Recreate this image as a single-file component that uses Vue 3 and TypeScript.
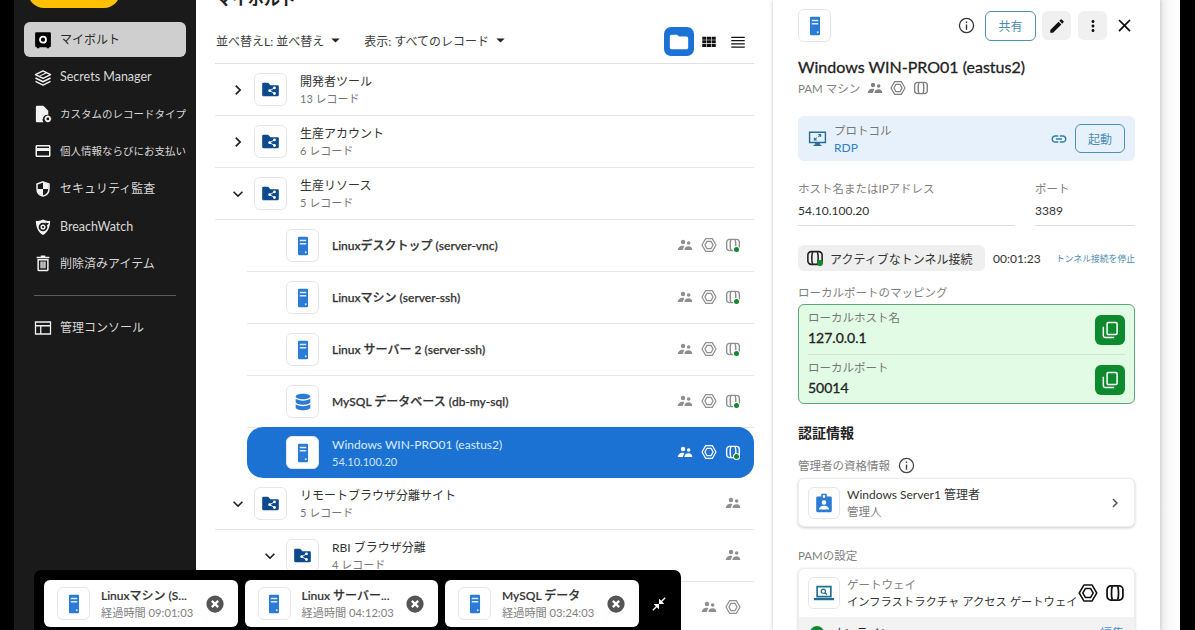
<script setup lang="ts">
type Row = {
  title: string
  sub?: string
  level: number
  kind: 'folder' | 'server' | 'db'
  open?: boolean
  closed?: boolean
  icons: 'none' | 'people' | 'two' | 'three'
  selected?: boolean
}

const navItems = [
  { icon: 'vault', label: 'マイボルト', active: true },
  { icon: 'layers', label: 'Secrets Manager', latin: true },
  { icon: 'filegear', label: 'カスタムのレコードタイプ', small: true },
  { icon: 'card', label: '個人情報ならびにお支払い', small: true },
  { icon: 'shield', label: 'セキュリティ監査' },
  { icon: 'breach', label: 'BreachWatch', latin: true },
  { icon: 'trash', label: '削除済みアイテム' },
]

const rows: Row[] = [
  { title: '開発者ツール', sub: '13 レコード', level: 0, kind: 'folder', closed: true, icons: 'none' },
  { title: '生産アカウント', sub: '6 レコード', level: 0, kind: 'folder', closed: true, icons: 'none' },
  { title: '生産リソース', sub: '5 レコード', level: 0, kind: 'folder', open: true, icons: 'none' },
  { title: 'Linuxデスクトップ (server-vnc)', level: 1, kind: 'server', icons: 'three' },
  { title: 'Linuxマシン (server-ssh)', level: 1, kind: 'server', icons: 'three' },
  { title: 'Linux サーバー 2 (server-ssh)', level: 1, kind: 'server', icons: 'three' },
  { title: 'MySQL データベース (db-my-sql)', level: 1, kind: 'db', icons: 'three' },
  { title: 'Windows WIN-PRO01 (eastus2)', sub: '54.10.100.20', level: 1, kind: 'server', icons: 'three', selected: true },
  { title: 'リモートブラウザ分離サイト', sub: '5 レコード', level: 0, kind: 'folder', open: true, icons: 'people' },
  { title: 'RBI ブラウザ分離', sub: '4 レコード', level: 1, kind: 'folder', open: true, icons: 'people' },
  { title: '', level: 2, kind: 'server', icons: 'two' },
]

const sessions = [
  { title: 'Linuxマシン (S...', time: '経過時間 09:01:03' },
  { title: 'Linux サーバー...', time: '経過時間 04:12:03' },
  { title: 'MySQL データ', time: '経過時間 03:24:03' },
]
</script>

<template>
  <svg class="sprite" aria-hidden="true">
    <defs>
      <symbol id="vault" viewBox="0 0 24 24">
        <path fill="#000" d="M3 1.500h18a1.500 1.500 0 0 1 1.500 1.500v17a1.500 1.500 0 0 1-1.500 1.500h-1v1.500h-3v-1.500H7v1.500H4v-1.500H3A1.500 1.500 0 0 1 1.500 20V3A1.500 1.500 0 0 1 3 1.500z" />
        <circle cx="12" cy="11.500" r="4" fill="none" stroke="#fff" stroke-width="2.400" />
      </symbol>
      <symbol id="layers" viewBox="0 0 24 24">
        <g fill="none" stroke="currentColor" stroke-width="1.900" stroke-linejoin="round">
          <path d="M12 2.500l10 5-10 5-10-5z" />
          <path d="M2 12l10 5 10-5" />
          <path d="M2 16.500l10 5 10-5" />
          <path d="M7.500 9.500l9-4.500" stroke-width="1.400" />
        </g>
      </symbol>
      <symbol id="filegear" viewBox="0 0 24 24">
        <path fill="currentColor" d="M4 1h8.500l6.500 6.500v5.600a6.500 6.500 0 0 0-6.500 9.900H4a1.500 1.500 0 0 1-1.500-1.500V2.500A1.500 1.500 0 0 1 4 1z" />
        <circle cx="18.500" cy="18.500" r="3" fill="none" stroke="currentColor" stroke-width="2.200" />
        <path stroke="currentColor" stroke-width="1.800" d="M18.500 14v1.800M18.500 21.200V23M14 18.500h1.800M21.200 18.500H23" />
      </symbol>
      <symbol id="card" viewBox="0 0 24 24">
        <path fill="currentColor" d="M20 4H4c-1.110 0-1.990.89-1.990 2L2 18c0 1.110.89 2 2 2h16c1.110 0 2-.89 2-2V6c0-1.110-.89-2-2-2zm0 14H4v-6h16v6zm0-10H4V6h16v2z" />
      </symbol>
      <symbol id="shield" viewBox="0 0 24 24">
        <path fill="none" stroke="currentColor" stroke-width="2" d="M12 2.500l8 3v6c0 5-3.400 8.700-8 10-4.600-1.300-8-5-8-10v-6z" />
        <path fill="currentColor" d="M12 3l7.500 2.800V12H12zM12 12H4.500c.3 4.600 3.400 7.900 7.500 9.200z" />
      </symbol>
      <symbol id="breach" viewBox="0 0 24 24">
        <path fill="currentColor" d="M2.500 3.500c3 .8 6.500.2 9.500-1.500 3 1.700 6.500 2.300 9.500 1.500C21.500 12 18.500 19 12 22.500 5.500 19 2.500 12 2.500 3.500z" />
        <circle cx="12" cy="12" r="4.600" fill="none" stroke="#1a1a1a" stroke-width="2.400" />
        <path fill="#1a1a1a" d="M15 6l5 1-4 4z" />
        <circle cx="12" cy="12" r="1.500" fill="#1a1a1a" />
      </symbol>
      <symbol id="trash" viewBox="0 0 24 24">
        <path fill="currentColor" d="M9 2h6v1.500h5.500V5.500h-17V3.500H9z" />
        <path fill="none" stroke="currentColor" stroke-width="2" d="M5.500 7.500h13V21a1 1 0 0 1-1 1h-11a1 1 0 0 1-1-1z" />
        <path stroke="currentColor" stroke-width="1.800" d="M9.500 10v9M12 10v9M14.500 10v9" />
      </symbol>
      <symbol id="console" viewBox="0 0 24 24">
        <path fill="none" stroke="currentColor" stroke-width="1.700" d="M2 4h20v16H2zM2 9h20M9 9v11" />
      </symbol>
      <symbol id="caret" viewBox="0 0 10 6"><path fill="currentColor" d="M0 .5h10L5 5.500z" /></symbol>
      <symbol id="chev-r" viewBox="0 0 24 24"><path fill="currentColor" d="M8.590 16.590L13.170 12 8.590 7.410 10 6l6 6-6 6z" /></symbol>
      <symbol id="chev-d" viewBox="0 0 24 24"><path fill="currentColor" d="M7.410 8.590L12 13.170l4.590-4.580L18 10l-6 6-6-6z" /></symbol>
      <symbol id="folder" viewBox="0 0 24 24"><path fill="currentColor" d="M10 4H4c-1.100 0-2 .9-2 2v12c0 1.100.9 2 2 2h16c1.100 0 2-.9 2-2V8c0-1.100-.9-2-2-2h-8l-2-2z" /></symbol>
      <symbol id="grid" viewBox="0 0 24 24"><path fill="currentColor" d="M3 5h5.500v4H3zM9.300 5h5.400v4H9.300zM15.500 5H21v4h-5.500zM3 9.800h5.500v4H3zM9.300 9.800h5.400v4H9.300zM15.500 9.800H21v4h-5.500zM3 14.600h5.500v4H3zM9.300 14.600h5.400v4H9.300zM15.500 14.600H21v4h-5.500z" /></symbol>
      <symbol id="list" viewBox="0 0 24 24"><path fill="currentColor" d="M3 5h18v1.700H3zM3 9.300h18V11H3zM3 13.600h18v1.700H3zM3 17.900h18v1.700H3z" /></symbol>
      <symbol id="foldershare" viewBox="0 0 24 24">
        <path fill="currentColor" d="M9 3.500H3C2.200 3.500 1.500 4.200 1.500 5v14c0 .8.700 1.500 1.500 1.500h18c.8 0 1.500-.7 1.500-1.500V8c0-.8-.7-1.500-1.500-1.500h-9z" />
        <g fill="#fff"><circle cx="17" cy="10" r="1.800" /><circle cx="17" cy="17" r="1.800" /><circle cx="11" cy="13.500" r="1.800" /></g>
        <path stroke="#fff" stroke-width="1.100" d="M17 10l-6 3.500 6 3.500" fill="none" />
      </symbol>
      <symbol id="server" viewBox="0 0 24 24">
        <rect x="6.500" y="2" width="11" height="20" rx="1.300" fill="currentColor" />
        <path stroke="#dcebfb" stroke-width="1.500" d="M8.500 6h7M8.500 9.500h7" />
        <circle cx="15" cy="18.800" r="1" fill="#dcebfb" />
      </symbol>
      <symbol id="db" viewBox="0 0 24 24">
        <path fill="currentColor" d="M12 3c-4.400 0-8 1.300-8 3s3.600 3 8 3 8-1.300 8-3-3.600-3-8-3zM4 8.500V12c0 1.700 3.600 3 8 3s8-1.300 8-3V8.500c-1.600 1.300-4.700 2-8 2s-6.400-.7-8-2zM4 14.500V18c0 1.700 3.600 3 8 3s8-1.300 8-3v-3.500c-1.600 1.300-4.700 2-8 2s-6.400-.7-8-2z" />
      </symbol>
      <symbol id="people" viewBox="0 0 24 24">
        <circle cx="9" cy="7.500" r="3.300" fill="currentColor" />
        <circle cx="17.500" cy="9" r="2.700" fill="currentColor" />
        <path fill="currentColor" d="M1 19.500c.5-4 3.500-6.500 7-6.500 1.100 0 2.200.2 3 .7l-2.600 5.800zM11 19.500c.5-4 3-5.500 6.500-5.500 3 0 5.300 2 5.500 5.500z" />
      </symbol>
      <symbol id="hex" viewBox="0 0 24 24">
        <path fill="none" stroke="currentColor" stroke-width="1.800" stroke-linejoin="round" d="M7 2.500h10l5.500 9.500L17 21.500H7L1.500 12z" />
        <path fill="none" stroke="currentColor" stroke-width="1.800" stroke-linejoin="round" d="M9 6.500h6l3.200 5.500L15 17.500H9L5.800 12z" />
      </symbol>
      <symbol id="tunnel" viewBox="0 0 24 24">
        <path fill="none" stroke="currentColor" stroke-width="2.100" d="M7 3.500h10A4.500 4.500 0 0 1 21.500 8v8a4.500 4.500 0 0 1-4.500 4.500H7A4.500 4.500 0 0 1 2.500 16V8A4.500 4.500 0 0 1 7 3.500z" />
        <path fill="none" stroke="currentColor" stroke-width="2.100" d="M9 4c-1.600 2-1.600 14 0 16M15 4c1.600 2 1.600 14 0 16" />
      </symbol>
      <symbol id="info" viewBox="0 0 24 24">
        <circle cx="12" cy="12" r="10" fill="none" stroke="currentColor" stroke-width="1.800" />
        <path fill="currentColor" d="M11 10.500h2V18h-2zM11 6.500h2v2h-2z" />
      </symbol>
      <symbol id="pencil" viewBox="0 0 24 24"><path fill="currentColor" d="M3 17.250V21h3.750L17.810 9.940l-3.750-3.750L3 17.250zM20.710 7.040a1 1 0 0 0 0-1.410l-2.340-2.340a1 1 0 0 0-1.410 0l-1.830 1.830 3.750 3.750 1.830-1.830z" /></symbol>
      <symbol id="dots" viewBox="0 0 24 24"><path fill="currentColor" d="M12 8c1.100 0 2-.9 2-2s-.9-2-2-2-2 .9-2 2 .9 2 2 2zm0 2c-1.100 0-2 .9-2 2s.9 2 2 2 2-.9 2-2-.9-2-2-2zm0 6c-1.100 0-2 .9-2 2s.9 2 2 2 2-.9 2-2-.9-2-2-2z" /></symbol>
      <symbol id="close" viewBox="0 0 24 24"><path fill="currentColor" d="M19 6.410L17.590 5 12 10.590 6.410 5 5 6.410 10.590 12 5 17.590 6.410 19 12 13.410 17.590 19 19 17.590 13.410 12z" /></symbol>
      <symbol id="link" viewBox="0 0 24 24"><path fill="currentColor" d="M3.900 12c0-1.710 1.390-3.100 3.100-3.100h4V7H7c-2.760 0-5 2.240-5 5s2.240 5 5 5h4v-1.900H7c-1.710 0-3.100-1.390-3.100-3.100zM8 13h8v-2H8v2zm9-6h-4v1.900h4c1.710 0 3.100 1.390 3.100 3.100s-1.390 3.100-3.100 3.100h-4V17h4c2.760 0 5-2.240 5-5s-2.240-5-5-5z" /></symbol>
      <symbol id="copy" viewBox="0 0 24 24">
        <rect x="8.500" y="3" width="12" height="14.500" rx="1.500" fill="none" stroke="currentColor" stroke-width="1.800" />
        <path fill="none" stroke="currentColor" stroke-width="1.800" d="M4 8v11a2 2 0 0 0 2 2h11" />
      </symbol>
      <symbol id="monitor" viewBox="0 0 24 24">
        <path fill="none" stroke="currentColor" stroke-width="1.800" d="M2 4h20v13H2z" />
        <path fill="currentColor" d="M9 17.500h6V20h2v1.500H7V20h2z" />
        <path stroke="currentColor" stroke-width="1.300" fill="none" d="M8 14l3-3M13 10l3-3M13 7h3v3M8 11v3h3" />
      </symbol>
      <symbol id="badge" viewBox="0 0 24 24">
        <path fill="currentColor" d="M9 2h6v3h4a1.500 1.500 0 0 1 1.500 1.500v14A1.500 1.500 0 0 1 19 22H5a1.500 1.500 0 0 1-1.500-1.500v-14A1.500 1.500 0 0 1 5 5h4z" />
        <rect x="10.800" y="3.400" width="2.400" height="3" fill="#fff" />
        <circle cx="12" cy="11.500" r="2.500" fill="#fff" />
        <path fill="#fff" d="M6.500 19c0-2.500 2.700-4 5.500-4s5.500 1.500 5.500 4z" />
      </symbol>
      <symbol id="laptop" viewBox="0 0 24 24">
        <path fill="none" stroke="currentColor" stroke-width="1.800" d="M4.500 5h15v11h-15z" />
        <path fill="currentColor" d="M1 17.500h22V19a1 1 0 0 1-1 1H2a1 1 0 0 1-1-1z" />
        <circle cx="11.300" cy="10" r="2.300" fill="none" stroke="currentColor" stroke-width="1.300" />
        <path stroke="currentColor" stroke-width="1.300" d="M13 11.700l2.200 2.200" />
      </symbol>
      <symbol id="xcircle" viewBox="0 0 24 24">
        <circle cx="12" cy="12" r="11.500" fill="currentColor" />
        <path stroke="#fff" stroke-width="3" d="M7.800 7.800l8.400 8.400M16.200 7.800l-8.400 8.400" />
      </symbol>
      <symbol id="shrink" viewBox="0 0 24 24">
        <path fill="currentColor" d="M22 3.410l-5.290 5.290L20 12h-8V4l3.290 3.290L20.590 2 22 3.410zM3.410 22l5.290-5.290L12 20v-8H4l3.290 3.290L2 20.590 3.410 22z" />
      </symbol>
    </defs>
  </svg>

  <div class="shell">
    <aside class="sidebar">
      <div class="create-btn"></div>
      <nav class="nav">
        <a v-for="item in navItems" :key="item.icon" class="nav-item" :class="{ active: item.active, small: item.small, latin: item.latin }">
          <svg class="nav-icon"><use :href="'#' + item.icon" /></svg>
          <span class="nav-label">{{ item.label }}</span>
        </a>
      </nav>
      <hr class="nav-rule" />
      <a class="nav-item">
        <svg class="nav-icon"><use href="#console" /></svg>
        <span class="nav-label">管理コンソール</span>
      </a>
    </aside>

    <main class="main">
      <h1 class="page-title">マイボルト</h1>
      <div class="toolbar">
        <span class="select">並べ替えL: 並べ替え<svg class="caret"><use href="#caret" /></svg></span>
        <span class="select">表示: すべてのレコード<svg class="caret"><use href="#caret" /></svg></span>
        <span class="views">
          <span class="view on"><svg><use href="#folder" /></svg></span>
          <span class="view"><svg><use href="#grid" /></svg></span>
          <span class="view"><svg><use href="#list" /></svg></span>
        </span>
      </div>

      <div
        v-for="(row, i) in rows"
        :key="i"
        class="row"
        :class="['level-' + row.level, { selected: row.selected }]"
      >
        <span class="chev">
          <svg v-if="row.closed"><use href="#chev-r" /></svg>
          <svg v-else-if="row.open"><use href="#chev-d" /></svg>
        </span>
        <span class="tile" :class="row.kind">
          <svg v-if="row.kind === 'folder'"><use href="#foldershare" /></svg>
          <svg v-else-if="row.kind === 'db'"><use href="#db" /></svg>
          <svg v-else><use href="#server" /></svg>
        </span>
        <span class="row-text">
          <span class="row-title" :class="{ strong: row.kind !== 'folder' }">{{ row.title }}</span>
          <span v-if="row.sub" class="row-sub">{{ row.sub }}</span>
        </span>
        <span class="row-icons">
          <svg v-if="row.icons !== 'none'" class="mini people"><use href="#people" /></svg>
          <svg v-if="row.icons === 'three' || row.icons === 'two'" class="mini"><use href="#hex" /></svg>
          <span v-if="row.icons === 'three'" class="tunnel-wrap">
            <svg class="mini"><use href="#tunnel" /></svg>
            <i class="dot"></i>
          </span>
        </span>
      </div>
    </main>

    <section class="panel">
      <div class="panel-head">
        <span class="tile server"><svg><use href="#server" /></svg></span>
        <span class="head-actions">
          <svg class="head-info"><use href="#info" /></svg>
          <button class="outline share">共有</button>
          <button class="square"><svg><use href="#pencil" /></svg></button>
          <button class="square"><svg><use href="#dots" /></svg></button>
          <svg class="head-close"><use href="#close" /></svg>
        </span>
      </div>
      <h2 class="panel-title">Windows WIN-PRO01 (eastus2)</h2>
      <div class="panel-sub">
        <span>PAM マシン</span>
        <svg><use href="#people" /></svg>
        <svg><use href="#hex" /></svg>
        <svg><use href="#tunnel" /></svg>
      </div>

      <div class="protocol">
        <svg class="proto-icon"><use href="#monitor" /></svg>
        <span class="proto-text">
          <span class="proto-label">プロトコル</span>
          <span class="proto-value">RDP</span>
        </span>
        <svg class="proto-link"><use href="#link" /></svg>
        <button class="outline launch">起動</button>
      </div>

      <div class="fields">
        <div class="field grow">
          <span class="label">ホスト名またはIPアドレス</span>
          <span class="value">54.10.100.20</span>
        </div>
        <div class="field port">
          <span class="label">ポート</span>
          <span class="value">3389</span>
        </div>
      </div>

      <div class="tunnel-line">
        <span class="chip">
          <span class="tunnel-wrap big">
            <svg><use href="#tunnel" /></svg>
            <i class="dot"></i>
          </span>
          アクティブなトンネル接続
        </span>
        <span class="timer">00:01:23</span>
        <a class="stop">トンネル接続を停止</a>
      </div>

      <div class="label map-label">ローカルポートのマッピング</div>
      <div class="mapping">
        <div class="map-row">
          <span class="map-text"><span class="label">ローカルホスト名</span><b>127.0.0.1</b></span>
          <button class="copy"><svg><use href="#copy" /></svg></button>
        </div>
        <div class="map-row">
          <span class="map-text"><span class="label">ローカルポート</span><b>50014</b></span>
          <button class="copy"><svg><use href="#copy" /></svg></button>
        </div>
      </div>

      <h3 class="section">認証情報</h3>
      <div class="label admin-label">管理者の資格情報<svg><use href="#info" /></svg></div>
      <div class="card">
        <span class="tile server"><svg><use href="#badge" /></svg></span>
        <span class="card-text">
          <span class="card-title">Windows Server1 管理者</span>
          <span class="card-sub">管理人</span>
        </span>
        <svg class="card-chev"><use href="#chev-r" /></svg>
      </div>

      <div class="label pam-label">PAMの設定</div>
      <div class="card gateway">
        <div class="gw-top">
          <span class="tile server teal"><svg><use href="#laptop" /></svg></span>
          <span class="card-text">
            <span class="card-sub">ゲートウェイ</span>
            <span class="card-title gw-title">インフラストラクチャ アクセス ゲートウェイ</span>
          </span>
          <svg class="gw-icon"><use href="#hex" /></svg>
          <svg class="gw-icon"><use href="#tunnel" /></svg>
        </div>
        <div class="gw-status">
          <i class="gw-dot"></i><span>オンライン</span><a>編集</a>
        </div>
      </div>
    </section>

    <div class="gutter"></div>

    <div class="dock">
      <div v-for="s in sessions" :key="s.title" class="session">
        <span class="tile server"><svg><use href="#server" /></svg></span>
        <span class="session-text">
          <span class="session-title">{{ s.title }}</span>
          <span class="session-time">{{ s.time }}</span>
        </span>
        <svg class="session-x"><use href="#xcircle" /></svg>
      </div>
      <svg class="shrink"><use href="#shrink" /></svg>
    </div>
  </div>
</template>

<style>
html, body { margin: 0; background: #000; }
</style>

<style scoped>
.sprite { position: absolute; width: 0; height: 0; overflow: hidden; }
.shell {
  position: relative;
  display: flex;
  width: 1195px;
  height: 630px;
  box-sizing: border-box;
  padding: 0 15px 0 14px;
  overflow: hidden;
  background: #000;
  font-family: Lato, "Noto Sans CJK JP", sans-serif;
  font-size: 12px;
  color: #26282b;
}
svg { display: block; }
button { font-family: inherit; cursor: pointer; }

/* sidebar */
.sidebar {
  flex: 0 0 182px;
  min-width: 0;
  box-sizing: border-box;
  padding: 0 10px;
  background: #1a1a1a;
  color: #d8d8d8;
}
.create-btn {
  width: 92px;
  height: 40px;
  margin: -32px 0 14px 4px;
  border-radius: 16px;
  background: #ffc000;
}
.nav { display: flex; flex-direction: column; }
.nav-item {
  display: flex;
  align-items: center;
  gap: 8px;
  box-sizing: border-box;
  height: 35px;
  margin-bottom: 2.330px;
  padding: 0 0 2px 10px;
  border-radius: 6px;
  white-space: nowrap;
  font-size: 12px;
}
.nav-item.small { font-size: 10.500px; }
.nav-item.latin { font-size: 12.500px; padding-bottom: 0; }
.nav-item.active { background: #cfcfcf; color: #2a2a2a; }
.nav-icon { flex: none; width: 18px; height: 18px; margin-top: 2px; color: #f2f2f2; }
.nav-rule {
  height: 1px;
  margin: 12px 10px 14px;
  border: 0;
  background: #5c5c5c;
}

/* list */
.main {
  flex: 0 0 577px;
  min-width: 0;
  box-sizing: border-box;
  padding: 0 19px;
  background: #fff;
}
.page-title {
  height: 22px;
  margin: -12px 0 0 1px;
  font-size: 16px;
  line-height: 22px;
  font-weight: 700;
  color: #1e1e1e;
}
.toolbar {
  display: flex;
  align-items: center;
  height: 54px;
  padding: 10px 0 0 1px;
  box-sizing: border-box;
  border-bottom: 1px solid #dfdfdf;
}
.select {
  display: flex;
  align-items: center;
  gap: 7px;
  margin: 0 24px 2px 0;
  font-size: 12px;
  color: #3c3c3c;
}
.caret { width: 9px; height: 5px; color: #222; }
.views { display: flex; align-items: center; margin-left: auto; margin-right: 2px; }
.view { display: grid; place-items: center; width: 29px; height: 29px; color: #111; }
.view svg { width: 18px; height: 18px; }
.view.on { width: 30px; border-radius: 7px; background: #1b72d6; color: #fff; }
.view.on svg { width: 22px; height: 22px; }

.row {
  display: flex;
  align-items: center;
  height: 52px;
  box-sizing: border-box;
  padding: 0 13px 0 13px;
  border-bottom: 1px solid #e6e6e6;
}
.level-1 { margin-left: 32px; }
.level-2 { margin-left: 64px; }
.selected {
  height: 51px;
  margin-top: -1px;
  border: 0;
  border-radius: 16px;
  background: #1b72d3;
  color: #fff;
}
.chev { flex: none; width: 20px; height: 20px; margin-right: 6px; color: #222; }
.chev svg { width: 20px; height: 20px; }
.tile {
  flex: none;
  display: grid;
  place-items: center;
  width: 31px;
  height: 31px;
  box-sizing: content-box;
  border: 1px solid #e6e6e6;
  border-radius: 6px;
  background: #fff;
  color: #2b7bd4;
}
.tile svg { width: 22px; height: 22px; }
.tile.folder { color: #0d4a8c; }
.tile.folder svg { width: 19px; height: 19px; }
.row-text {
  display: flex;
  flex-direction: column;
  gap: 2px;
  margin-left: 13px;
  min-width: 0;
}
.row-title { font-size: 12px; line-height: 16px; font-weight: 400; white-space: nowrap; color: #333; }
.row-title.strong { font-weight: 500; font-size: 12px; -webkit-text-stroke: .25px #333; }
.row-sub { font-size: 11px; line-height: 14px; color: #777; }
.selected .row-title { color: #dcecff; font-weight: 400; -webkit-text-stroke: 0; }
.selected .row-sub { color: #cfe4fb; }
.row-icons { display: flex; align-items: center; gap: 8px; margin: 0 0 2px auto; color: #8f8f8f; }
.mini { width: 16px; height: 16px; }
.selected .row-icons { color: #fff; }
.tunnel-wrap { position: relative; display: block; width: 16px; height: 16px; }
.dot {
  position: absolute;
  right: 2px;
  bottom: 1px;
  width: 5px;
  height: 5px;
  border-radius: 50%;
  background: #12872e;
  box-shadow: 0 0 0 1px #fff;
}

/* panel */
.panel {
  flex: 0 0 387px;
  min-width: 0;
  box-sizing: border-box;
  padding: 9px 25px 0;
  background: #fff;
  box-shadow: 0 0 4px rgba(0, 0, 0, .22);
  position: relative;
}
.panel-head { display: flex; align-items: center; justify-content: space-between; }
.head-actions { display: flex; align-items: center; }
.head-info { width: 17px; height: 17px; margin-right: 10px; color: #333; }
.outline {
  border: 1px solid #4f8fb3;
  border-radius: 6px;
  background: #fff;
  color: #4a8cb2;
  font-size: 12px;
}
.share { width: 51px; height: 30px; margin-right: 6px; }
.square {
  display: grid;
  place-items: center;
  width: 29px;
  height: 29px;
  margin-right: 7px;
  border: 0;
  border-radius: 6px;
  background: #f0f0f0;
  color: #111;
  padding: 0;
}
.square svg { width: 18px; height: 18px; }
.head-close { width: 21px; height: 21px; color: #111; }
.panel-title { margin: 14px 0 0; font-size: 16px; line-height: 22px; font-weight: 400; color: #222; white-space: nowrap; -webkit-text-stroke: .3px #222; }
.panel-sub { display: flex; align-items: center; gap: 7px; height: 20px; margin-top: 0; color: #808080; font-size: 11.500px; }
.panel-sub svg { width: 16px; height: 16px; }
.protocol {
  display: flex;
  align-items: center;
  height: 45px;
  margin-top: 18px;
  padding: 0 10px;
  border-radius: 6px;
  background: #e7f1fb;
}
.proto-icon { width: 19px; height: 19px; color: #2a6f93; }
.proto-text { display: flex; flex-direction: column; margin-left: 7px; font-size: 11.500px; }
.proto-label { color: #777; line-height: 17px; }
.proto-value { color: #2f7fc6; line-height: 17px; font-size: 12px; }
.proto-link { width: 18px; height: 18px; margin-left: auto; margin-right: 7px; color: #2f7fa6; }
.launch { width: 50px; height: 29px; background: transparent; font-size: 12px; }
.label { color: #808080; font-size: 11.500px; }
.fields { display: flex; gap: 20px; margin-top: 19px; }
.field { display: flex; flex-direction: column; padding-bottom: 5px; border-bottom: 1px solid #dedede; }
.field .label { line-height: 18px; }
.field .value { margin-top: 4px; line-height: 18px; font-size: 12px; color: #333; }
.grow { width: 217px; }
.port { flex: 1; }
.tunnel-line { display: flex; align-items: center; height: 26px; margin-top: 19px; }
.chip {
  display: flex;
  align-items: center;
  gap: 6px;
  box-sizing: border-box;
  width: 187px;
  height: 26px;
  padding-left: 8px;
  border-radius: 6px;
  background: #efefef;
  font-size: 12px;
  color: #333;
  white-space: nowrap;
}
.big { width: 18px; height: 18px; color: #222; }
.big svg { width: 18px; height: 18px; }
.big .dot { right: 1px; bottom: 1px; width: 6px; height: 6px; box-shadow: none; }
.timer { margin-left: 8px; font-size: 12px; color: #333; }
.stop { margin-left: auto; font-size: 8.800px; color: #4a8cb2; white-space: nowrap; }
.map-label { margin-top: 13px; line-height: 18px; }
.mapping {
  box-sizing: border-box;
  height: 100px;
  margin-top: 2px;
  padding: 0 9px;
  border: 1px solid #5da578;
  border-radius: 6px;
  background: #e2fbe5;
}
.map-row { display: flex; align-items: center; justify-content: space-between; height: 49px; }
.map-row + .map-row { border-top: 1px solid #cfe6d3; }
.map-text { display: flex; flex-direction: column; padding-bottom: 3px; }
.map-text .label { line-height: 16px; color: #777; }
.map-text b { margin-top: 3px; font-size: 14px; line-height: 18px; font-weight: 400; color: #222; -webkit-text-stroke: .3px #222; }
.copy {
  display: grid;
  place-items: center;
  width: 30px;
  height: 30px;
  padding: 0;
  border: 0;
  border-radius: 6px;
  background: #0e8a2e;
  color: #fff;
}
.copy svg { width: 20px; height: 20px; }
.section { margin: 19px 0 0; font-size: 14px; line-height: 20px; font-weight: 700; color: #222; }
.admin-label { display: flex; align-items: center; gap: 8px; height: 18px; margin-top: 13px; }
.admin-label svg { width: 17px; height: 17px; color: #444; }
.card {
  display: flex;
  align-items: center;
  box-sizing: border-box;
  height: 49px;
  margin-top: 4px;
  padding: 0 10px 0 9px;
  border: 1px solid #eee;
  border-radius: 6px;
  background: #fff;
  box-shadow: 0 1px 3px rgba(0, 0, 0, .2);
}
.card .tile { width: 30px; height: 30px; }
.card-text { display: flex; flex-direction: column; margin-left: 7px; min-width: 0; }
.card-title { font-size: 12px; line-height: 17px; color: #333; white-space: nowrap; }
.gw-title { font-size: 11.300px; }
.card-sub { font-size: 11.500px; line-height: 17px; color: #808080; }
.card-chev { width: 18px; height: 18px; margin-left: auto; color: #555; }
.pam-label { margin-top: 20px; line-height: 18px; }
.gateway {
  display: block;
  height: 70px;
  margin-top: 3px;
  padding: 0;
  overflow: hidden;
}
.gw-top { display: flex; align-items: center; height: 48px; padding: 0 9px 0 9px; }
.teal { color: #1f6f93; }
.gw-icon { flex: none; width: 20px; height: 20px; margin-left: 7px; color: #111; }
.gw-top .card-text { margin-right: auto; }
.gw-status { display: flex; align-items: flex-start; gap: 8px; height: 24px; padding: 9px 10px 0 11px; background: #f2f2f2; font-size: 12px; line-height: 16px; }
.gw-dot { width: 14px; height: 14px; border-radius: 50%; background: #12872e; }
.gw-status a { margin-left: auto; color: #4a8cd2; }

.gutter {
  flex: 1;
  background: linear-gradient(90deg, #ededed, #fafafa 10px, #fff);
}

/* dock */
.dock {
  position: absolute;
  left: 34px;
  bottom: 0;
  display: flex;
  align-items: flex-start;
  gap: 7px;
  box-sizing: border-box;
  width: 647px;
  height: 60px;
  padding: 10px 0 0 10px;
  border-radius: 7px 7px 0 0;
  background: #000;
}
.session {
  flex: 0 0 193.500px;
  display: flex;
  align-items: center;
  box-sizing: border-box;
  height: 47px;
  padding: 0 14px 0 13px;
  border-radius: 6px;
  background: #fff;
}
.session-text { display: flex; flex-direction: column; gap: 1px; margin-left: 11px; padding-top: 2px; }
.session-title { font-size: 12px; line-height: 16px; font-weight: 500; color: #333; white-space: nowrap; -webkit-text-stroke: .2px #333; }
.session-time { font-size: 11.200px; line-height: 16px; color: #808080; white-space: nowrap; }
.session-x { width: 18px; height: 18px; margin-left: auto; color: #555; }
.shrink { width: 16px; height: 16px; margin: 16px 0 0 5px; color: #fff; }
</style>
